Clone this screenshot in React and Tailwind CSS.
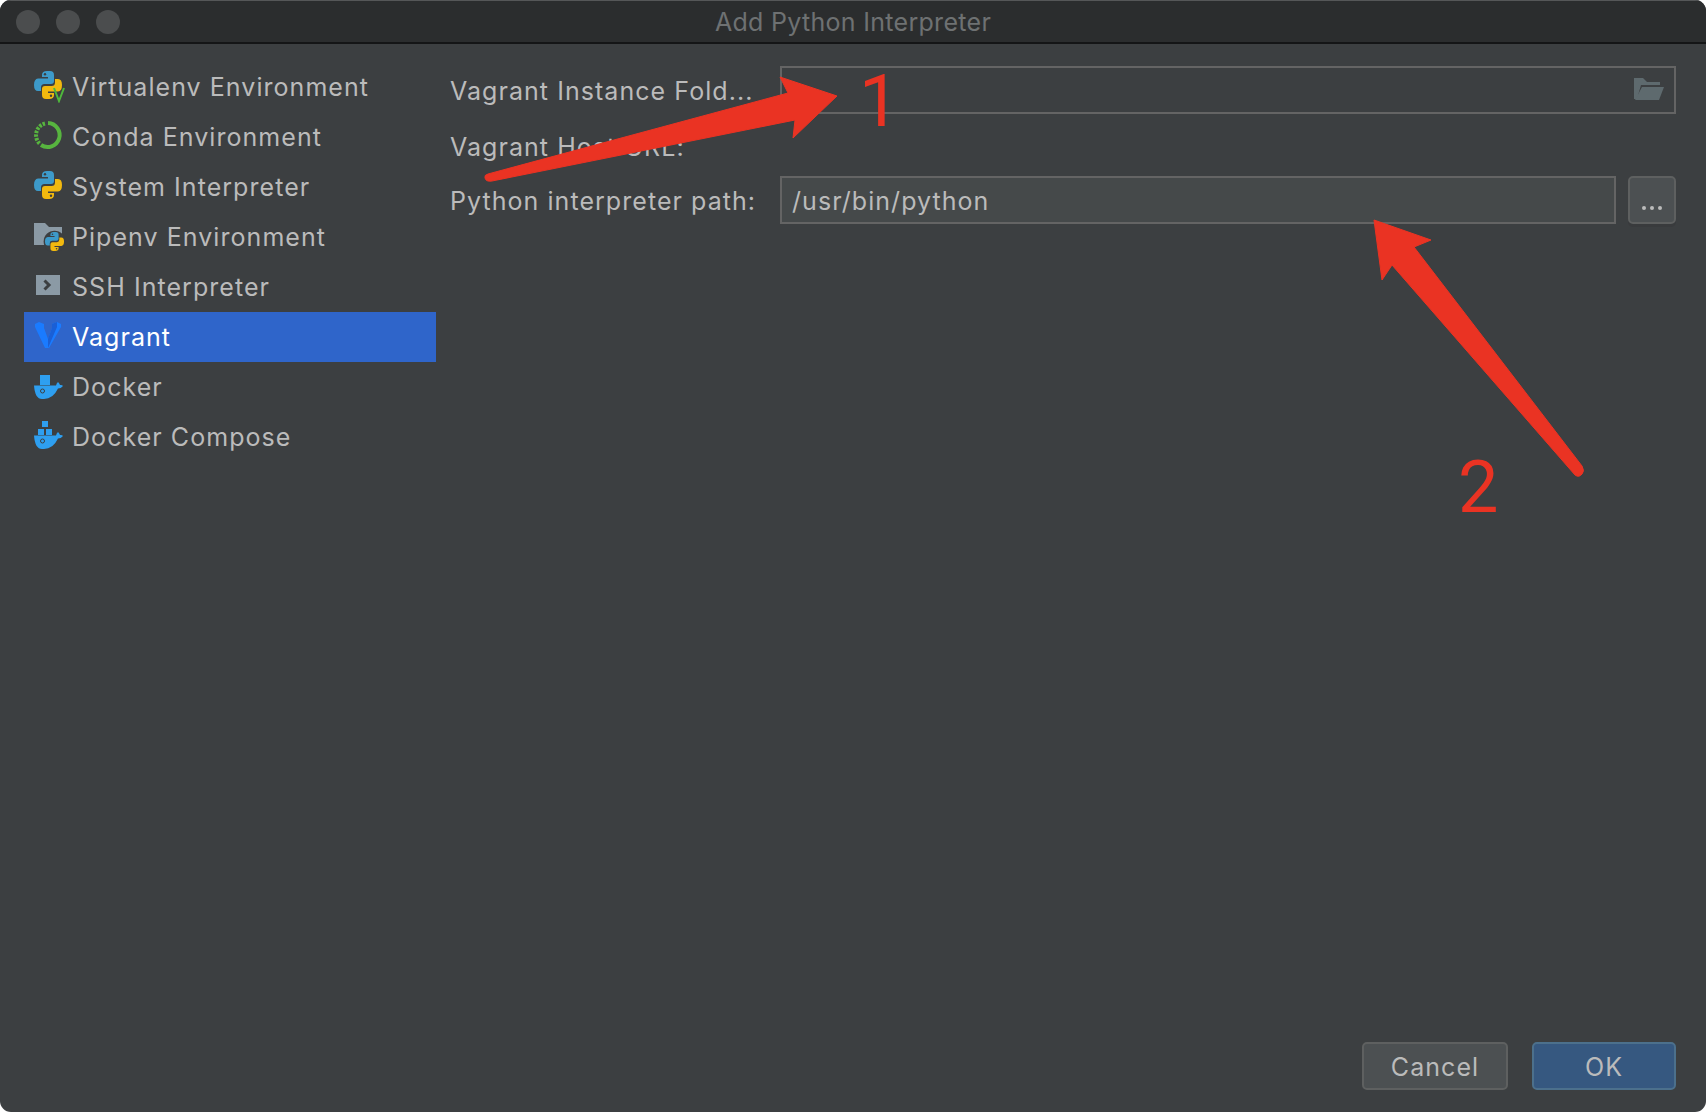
import React from "react";

const items = [
  { name: "Virtualenv Environment", icon: "virtualenv" },
  { name: "Conda Environment", icon: "conda" },
  { name: "System Interpreter", icon: "python" },
  { name: "Pipenv Environment", icon: "pipenv" },
  { name: "SSH Interpreter", icon: "ssh" },
  { name: "Vagrant", icon: "vagrant", active: true },
  { name: "Docker", icon: "docker" },
  { name: "Docker Compose", icon: "compose" },
];

const Snake = () => (
  <>
    <path fill="#3d9ac9" d="M8 4Q8 0 13 0H16Q20 0 20 4V10Q20 13 17 13H10.500Q7 13 7 16.500V20H4Q0 20 0 14Q0 8 4 7.500H14V6H8Z" />
    <circle cx="11" cy="3.300" r="1.200" fill="#3c3f41" />
    <path fill="#f2b90f" d="M20 24Q20 28 15 28H12Q8 28 8 24V18Q8 15 11 15H17.500Q21 15 21 11.500V8H24Q28 8 28 14Q28 20 24 20.500H14V22H20Z" />
    <circle cx="17" cy="24.700" r="1.200" fill="#3c3f41" />
  </>
);

const Whale = () => (
  <>
    <path fill="#2e9ff0" d="M0 14.500H22Q22.500 12 24 11Q25.500 12.500 26 14Q28 13.500 29 15Q27 17.500 24 17.500Q19 28 10 28H8Q1 28 0 14.500Z" />
    <circle cx="8.500" cy="20" r="2" fill="none" stroke="#3c3f41" strokeWidth="1" />
  </>
);

const ItemIcon = ({ type }) => {
  if (type === "virtualenv")
    return (
      <svg width="32" height="32" viewBox="0 0 32 32">
        <Snake />
        <path d="M20 17L25 30L30 17" fill="none" stroke="#4fb83c" strokeWidth="2" />
      </svg>
    );
  if (type === "conda")
    return (
      <svg width="32" height="32" viewBox="0 0 32 32">
        <path d="M14 2A12 12 0 1 1 7 24" fill="none" stroke="#57b53f" strokeWidth="4" />
        <path d="M11 2.500A12 12 0 0 0 6 23" fill="none" stroke="#57b53f" strokeWidth="4" strokeDasharray="2.500 1.200" />
      </svg>
    );
  if (type === "python")
    return (
      <svg width="32" height="32" viewBox="0 0 32 32">
        <Snake />
      </svg>
    );
  if (type === "pipenv")
    return (
      <svg width="32" height="32" viewBox="0 0 32 32">
        <path fill="#8b9aa5" d="M0 2H11L15 6H28V24H0Z" />
        <g transform="translate(11 11) scale(0.68)">
          <circle cx="14" cy="14" r="16" fill="#3c3f41" />
          <Snake />
        </g>
      </svg>
    );
  if (type === "ssh")
    return (
      <svg width="32" height="32" viewBox="0 0 32 32">
        <rect x="2" y="4" width="24" height="20" fill="#8b9aa5" />
        <path d="M10.500 9.500L15 14L10.500 18.500" fill="none" stroke="#3c3f41" strokeWidth="3" />
      </svg>
    );
  if (type === "vagrant")
    return (
      <svg width="32" height="32" viewBox="0 0 32 32">
        <path fill="#1a7bff" d="M1 3L5 1L10 3V7L14 18L18 7V3L23 1L27 3V6L15 27H11L1 6Z" />
        <path fill="#1a5fd6" d="M14 18L18 7V3L23 1V6L14 27Z" />
      </svg>
    );
  if (type === "docker")
    return (
      <svg width="32" height="32" viewBox="0 0 32 32">
        <rect x="6" y="4" width="10" height="10" fill="#2e9ff0" />
        <Whale />
      </svg>
    );
  return (
    <svg width="32" height="32" viewBox="0 0 32 32">
      <rect x="8" y="0" width="6" height="6" fill="#2e9ff0" />
      <rect x="4" y="8" width="6" height="6" fill="#2e9ff0" />
      <rect x="12" y="8" width="6" height="6" fill="#2e9ff0" />
      <Whale />
    </svg>
  );
};

const App = () => {
  return (
    <div className="relative w-[1706px] h-[1112px] overflow-hidden bg-white font-['Inter',sans-serif] text-[25px] tracking-[1.05px] text-[#bbbbbb]">
      <div className="flex flex-col h-full rounded-[11px] overflow-hidden bg-[#3c3f41]">
        <div className="relative flex items-center h-[44px] shrink-0 gap-4 pl-4 bg-[#2b2d2e] border-t border-[#555758] border-b-2 border-b-[#141516]">
          <span className="w-6 h-6 rounded-full bg-[#4b4d4e]" />
          <span className="w-6 h-6 rounded-full bg-[#4b4d4e]" />
          <span className="w-6 h-6 rounded-full bg-[#4b4d4e]" />
          <span className="absolute inset-0 flex items-center justify-center pt-[3px] tracking-[0.3px] text-[#6e7172]">Add Python Interpreter</span>
        </div>

        <div className="flex flex-1 min-h-0">
          <div className="w-[436px] shrink-0 pl-6 pt-[18px]">
            {items.map((item) => (
              <div
                key={item.name}
                className={`flex items-center h-[50px] pl-[10px] ${item.active ? "bg-[#2f65ca] text-white" : ""}`}
              >
                <div className="w-[38px] h-[32px] shrink-0">
                  <ItemIcon type={item.icon} />
                </div>
                <span className="translate-y-[1px]">{item.name}</span>
              </div>
            ))}
          </div>

          <div className="flex flex-col flex-1 min-w-0 pl-[14px] pr-[30px] pt-[22px]">
            <div className="flex items-center h-[48px]">
              <span className="w-[330px] shrink-0 translate-y-[2px]">Vagrant Instance Fold...</span>
              <div className="flex flex-1 items-center justify-end h-full pr-[10px] border-2 border-[#646464]">
                <svg width="30" height="24" viewBox="0 0 30 24">
                  <path fill="#5e6a6e" d="M0 0H9L13 4H26V7H7L3 21H0Z" />
                  <path fill="#5e6a6e" d="M8 9H30L25 22H1Z" />
                </svg>
              </div>
            </div>
            <div className="flex items-center h-[62px]">
              <span className="translate-y-[3px]">Vagrant Host URL:</span>
            </div>
            <div className="flex items-center h-[48px]">
              <span className="w-[330px] shrink-0 translate-y-[2px]">Python interpreter path:</span>
              <div className="flex flex-1 items-center h-full px-[10px] pt-[4px] bg-[#45494a] border-2 border-[#646464]">/usr/bin/python</div>
              <button className="flex items-center justify-center w-[48px] h-full ml-[12px] pt-[16px] rounded-[5px] bg-[#4c5052] border-2 border-[#5e6060] shadow-[0_3px_0_#393b3d] text-[#bbbbbb] leading-none">
                <span className="flex gap-[4px]">
                  <span className="w-1 h-1 rounded-full bg-[#bbbbbb]" />
                  <span className="w-1 h-1 rounded-full bg-[#bbbbbb]" />
                  <span className="w-1 h-1 rounded-full bg-[#bbbbbb]" />
                </span>
              </button>
            </div>
          </div>
        </div>

        <div className="flex justify-end gap-[24px] pr-[30px] pb-[22px]">
          <button className="w-[146px] h-[48px] pt-[4px] rounded-[5px] bg-[#4c5052] border-2 border-[#5e6060]">Cancel</button>
          <button className="w-[144px] h-[48px] pt-[4px] rounded-[5px] bg-[#365880] border-2 border-[#4c708c]">OK</button>
        </div>
      </div>

      {/* red annotations drawn over the dialog */}
      <svg className="absolute inset-0 pointer-events-none" width="1706" height="1112" viewBox="0 0 1706 1112">
        <path fill="#ea3323" stroke="#ea3323" strokeLinejoin="round" strokeWidth="1" d="M837 96L793 138L795 120L492 181Q486 182 485 178Q484 175 488 174L788 93L780 77Z" />
        <path fill="#ea3323" stroke="#ea3323" strokeLinejoin="round" strokeWidth="1" d="M1374 220L1431 240L1414 247L1582 466Q1585 471 1582 474Q1579 478 1575 475L1392 265L1382 280Z" />
      </svg>
      <span className="absolute left-[859px] top-[66px] font-['Roboto',sans-serif] font-normal text-[72px] leading-[72px] tracking-normal text-[#ea3323]">1</span>
      <span className="absolute left-[1458px] top-[452px] font-['Roboto',sans-serif] font-normal text-[72px] leading-[72px] tracking-normal text-[#ea3323]">2</span>
    </div>
  );
};

export default App;
